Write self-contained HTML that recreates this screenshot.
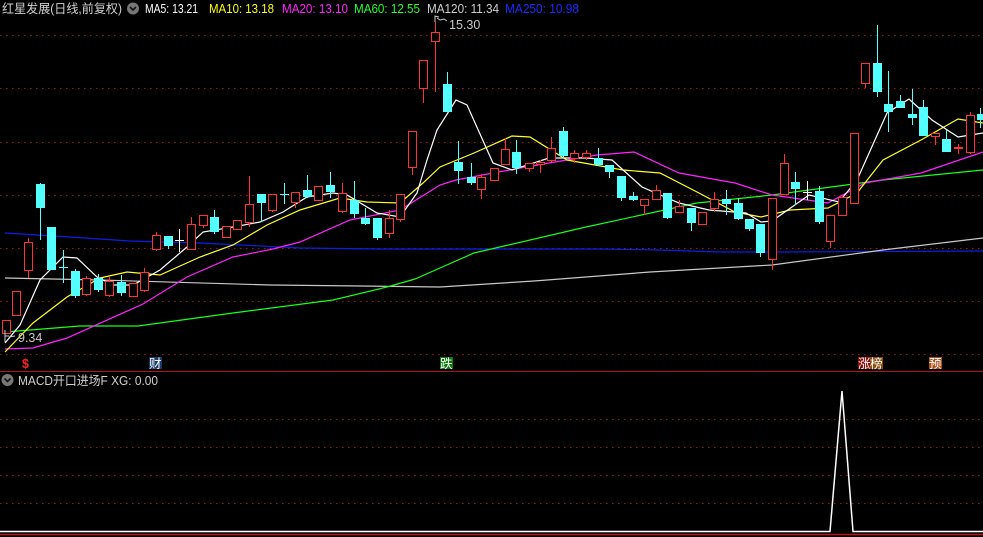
<!DOCTYPE html>
<html><head><meta charset="utf-8"><style>
html,body{margin:0;padding:0;background:#000;width:983px;height:537px;overflow:hidden}
svg{display:block}
text{font-family:"Liberation Sans","Noto Sans CJK SC",sans-serif;font-size:12.5px}
</style></head><body>
<svg width="983" height="537" viewBox="0 0 983 537" xmlns="http://www.w3.org/2000/svg">
<rect width="983" height="537" fill="#000"/>
<g stroke="#a01818" stroke-width="1" stroke-dasharray="1.5 4.5">
<line x1="0" y1="35.5" x2="983" y2="35.5"/><line x1="0" y1="88.5" x2="983" y2="88.5"/><line x1="0" y1="142.5" x2="983" y2="142.5"/><line x1="0" y1="195.5" x2="983" y2="195.5"/><line x1="0" y1="248.5" x2="983" y2="248.5"/><line x1="0" y1="301.5" x2="983" y2="301.5"/><line x1="0" y1="354.5" x2="983" y2="354.5"/>
<line x1="0" y1="419.5" x2="983" y2="419.5"/><line x1="0" y1="447.5" x2="983" y2="447.5"/><line x1="0" y1="475.5" x2="983" y2="475.5"/><line x1="0" y1="503.5" x2="983" y2="503.5"/>
</g>
<line x1="0" y1="371.5" x2="983" y2="371.5" stroke="#b01414"/>
<line x1="0" y1="534.5" x2="983" y2="534.5" stroke="#c01414" stroke-width="1.5"/>
<g fill="none" stroke-width="1.2">
<polyline stroke="#0a1ee6" points="5,233 70,237 130,241 200,243 300,248 383,249 480,249 600,249 660,250 720,252 780,252 983,251"/>
<polyline stroke="#c8c8c8" points="5,278 100,280 270,285 360,286 440,287 534,281 650,272 772,265 883,250 983,238"/>
<polyline stroke="#18ff18" points="5,332 80,326 138,326 233,313 333,300 387,287 415,279 440,268 474,253 586,227 697,203 772,195 883,180 983,170"/>
<polyline stroke="#ff22ff" points="5,349 33,348 67,338 143,304 187,277 233,257 273,249 300,242 350,220 400,210 440,185 456,180 493,173 549,163 597,155 634,152 679,173 735,183 772,195 828,203 865,183 921,173 983,152"/>
<polyline stroke="#ffff22" points="5,352 33,323 67,297 100,278 127,272 160,275 200,257 233,245 267,225 300,210 340,198 367,202 400,203 423,183 440,167 474,153 512,136 530,137 567,160 623,170 660,173 697,192 735,212 761,217 790,210 828,208 857,193 883,160 921,140 958,119 983,123"/>
<polyline stroke="#ffffff" points="5,343 20,325 40,280 63,257 77,258 97,277 113,285 133,285 160,270 187,247 203,232 233,227 260,222 283,212 307,197 333,193 347,195 377,213 400,217 417,193 427,160 437,130 456,100 467,105 493,163 512,170 549,158 586,158 612,160 642,187 679,203 709,210 746,213 761,222 772,221 809,195 839,202 857,180 887,113 909,99 932,120 958,137 983,133"/>
</g>
<g stroke="#ff3232" stroke-width="1" shape-rendering="crispEdges">
<line x1="6.5" y1="320" x2="6.5" y2="333"/><line x1="16.5" y1="291" x2="16.5" y2="315"/><line x1="28.5" y1="238" x2="28.5" y2="278"/><line x1="86.5" y1="276" x2="86.5" y2="296"/><line x1="109.5" y1="277" x2="109.5" y2="297"/><line x1="133.5" y1="283" x2="133.5" y2="296"/><line x1="144.5" y1="268" x2="144.5" y2="292"/><line x1="156.5" y1="232" x2="156.5" y2="251"/><line x1="191.5" y1="217" x2="191.5" y2="249"/><line x1="203.5" y1="215" x2="203.5" y2="228"/><line x1="226.5" y1="226" x2="226.5" y2="237"/><line x1="237.5" y1="220" x2="237.5" y2="229"/><line x1="249.5" y1="176" x2="249.5" y2="227"/><line x1="272.5" y1="194" x2="272.5" y2="212"/><line x1="295.5" y1="192" x2="295.5" y2="208"/><line x1="318.5" y1="186" x2="318.5" y2="200"/><line x1="342.5" y1="183" x2="342.5" y2="213"/><line x1="389.5" y1="210" x2="389.5" y2="238"/><line x1="400.5" y1="194" x2="400.5" y2="222"/><line x1="412.5" y1="131" x2="412.5" y2="175"/><line x1="423.5" y1="60" x2="423.5" y2="103"/><line x1="435.5" y1="22" x2="435.5" y2="92"/><line x1="481.5" y1="174" x2="481.5" y2="199"/><line x1="494.5" y1="168" x2="494.5" y2="180"/><line x1="505.5" y1="138" x2="505.5" y2="164"/><line x1="529.5" y1="163" x2="529.5" y2="172"/><line x1="540.5" y1="160" x2="540.5" y2="173"/><line x1="551.5" y1="137" x2="551.5" y2="162"/><line x1="574.5" y1="150" x2="574.5" y2="163"/><line x1="586.5" y1="150" x2="586.5" y2="160"/><line x1="644.5" y1="199" x2="644.5" y2="215"/><line x1="656.5" y1="185" x2="656.5" y2="200"/><line x1="679.5" y1="200" x2="679.5" y2="213"/><line x1="702.5" y1="212" x2="702.5" y2="224"/><line x1="714.5" y1="192" x2="714.5" y2="212"/><line x1="772.5" y1="198" x2="772.5" y2="270"/><line x1="784.5" y1="154" x2="784.5" y2="194"/><line x1="830.5" y1="215" x2="830.5" y2="248"/><line x1="842.5" y1="195" x2="842.5" y2="216"/><line x1="854.5" y1="133" x2="854.5" y2="203"/><line x1="865.5" y1="63" x2="865.5" y2="88"/><line x1="935.5" y1="133" x2="935.5" y2="145"/><line x1="958.5" y1="144" x2="958.5" y2="154"/><line x1="970.5" y1="112" x2="970.5" y2="154"/>
</g>
<g stroke="#ff3232" stroke-width="1" fill="#000" shape-rendering="crispEdges">
<rect x="2.5" y="320.5" width="8" height="13"/><rect x="12.5" y="291.5" width="8" height="24"/><rect x="24.5" y="242.5" width="8" height="28"/><rect x="82.5" y="278.5" width="8" height="16"/><rect x="105.5" y="281.5" width="8" height="14"/><rect x="129.5" y="283.5" width="8" height="13"/><rect x="140.5" y="272.5" width="8" height="18"/><rect x="152.5" y="235.5" width="8" height="14"/><rect x="187.5" y="224.5" width="8" height="25"/><rect x="199.5" y="215.5" width="8" height="10"/><rect x="222.5" y="226.5" width="8" height="11"/><rect x="233.5" y="220.5" width="8" height="9"/><rect x="245.5" y="204.5" width="8" height="18"/><rect x="268.5" y="194.5" width="8" height="16"/><rect x="291.5" y="192.5" width="8" height="10"/><rect x="314.5" y="186.5" width="8" height="14"/><rect x="338.5" y="193.5" width="8" height="18"/><rect x="385.5" y="218.5" width="8" height="15"/><rect x="396.5" y="194.5" width="8" height="25"/><rect x="408.5" y="131.5" width="8" height="36"/><rect x="419.5" y="60.5" width="8" height="28"/><rect x="431.5" y="32.5" width="8" height="9"/><rect x="477.5" y="177.5" width="8" height="12"/><rect x="490.5" y="168.5" width="8" height="12"/><rect x="501.5" y="149.5" width="8" height="15"/><rect x="525.5" y="163.5" width="8" height="5"/><rect x="536.5" y="162.5" width="8" height="2"/><rect x="547.5" y="148.5" width="8" height="12"/><rect x="570.5" y="153.5" width="8" height="5"/><rect x="582.5" y="153.5" width="8" height="4"/><rect x="640.5" y="199.5" width="8" height="6"/><rect x="652.5" y="190.5" width="8" height="9"/><rect x="675.5" y="206.5" width="8" height="6"/><rect x="698.5" y="212.5" width="8" height="12"/><rect x="710.5" y="199.5" width="8" height="9"/><rect x="768.5" y="198.5" width="8" height="61"/><rect x="780.5" y="163.5" width="8" height="31"/><rect x="826.5" y="215.5" width="8" height="26"/><rect x="838.5" y="197.5" width="8" height="18"/><rect x="850.5" y="133.5" width="8" height="70"/><rect x="861.5" y="63.5" width="8" height="20"/><rect x="931.5" y="133.5" width="8" height="3"/><rect x="954.5" y="147.5" width="8" height="1"/><rect x="966.5" y="115.5" width="8" height="37"/>
</g>
<g stroke="#54ffff" stroke-width="1" shape-rendering="crispEdges">
<line x1="40.5" y1="183" x2="40.5" y2="240"/><line x1="51.5" y1="227" x2="51.5" y2="270"/><line x1="63.5" y1="250" x2="63.5" y2="283"/><line x1="59" y1="267.5" x2="68" y2="267.5"/><line x1="75.5" y1="269" x2="75.5" y2="298"/><line x1="98.5" y1="274" x2="98.5" y2="292"/><line x1="121.5" y1="275" x2="121.5" y2="296"/><line x1="168.5" y1="236" x2="168.5" y2="249"/><line x1="214.5" y1="210" x2="214.5" y2="234"/><line x1="261.5" y1="194" x2="261.5" y2="222"/><line x1="284.5" y1="183" x2="284.5" y2="204"/><line x1="280" y1="194.5" x2="289" y2="194.5"/><line x1="307.5" y1="175" x2="307.5" y2="198"/><line x1="330.5" y1="172" x2="330.5" y2="198"/><line x1="354.5" y1="181" x2="354.5" y2="218"/><line x1="365.5" y1="208" x2="365.5" y2="225"/><line x1="377.5" y1="218" x2="377.5" y2="240"/><line x1="447.5" y1="72" x2="447.5" y2="112"/><line x1="458.5" y1="141" x2="458.5" y2="184"/><line x1="471.5" y1="163" x2="471.5" y2="185"/><line x1="516.5" y1="140" x2="516.5" y2="174"/><line x1="563.5" y1="127" x2="563.5" y2="158"/><line x1="598.5" y1="148" x2="598.5" y2="166"/><line x1="609.5" y1="165" x2="609.5" y2="178"/><line x1="621.5" y1="176" x2="621.5" y2="201"/><line x1="633.5" y1="192" x2="633.5" y2="201"/><line x1="667.5" y1="193" x2="667.5" y2="219"/><line x1="691.5" y1="208" x2="691.5" y2="231"/><line x1="726.5" y1="190" x2="726.5" y2="215"/><line x1="738.5" y1="198" x2="738.5" y2="220"/><line x1="749.5" y1="219" x2="749.5" y2="231"/><line x1="760.5" y1="224" x2="760.5" y2="257"/><line x1="795.5" y1="172" x2="795.5" y2="205"/><line x1="819.5" y1="186" x2="819.5" y2="224"/><line x1="877.5" y1="25" x2="877.5" y2="97"/><line x1="888.5" y1="71" x2="888.5" y2="132"/><line x1="900.5" y1="95" x2="900.5" y2="108"/><line x1="912.5" y1="89" x2="912.5" y2="125"/><line x1="923.5" y1="100" x2="923.5" y2="136"/><line x1="946.5" y1="130" x2="946.5" y2="152"/><line x1="980.5" y1="108" x2="980.5" y2="128"/>
</g>
<g fill="#54ffff" shape-rendering="crispEdges">
<rect x="36" y="184" width="9" height="24"/><rect x="47" y="227" width="9" height="43"/><rect x="71" y="271" width="9" height="25"/><rect x="94" y="278" width="9" height="12"/><rect x="117" y="282" width="9" height="11"/><rect x="164" y="236" width="9" height="10"/><rect x="210" y="217" width="9" height="15"/><rect x="257" y="194" width="9" height="9"/><rect x="303" y="190" width="9" height="7"/><rect x="326" y="185" width="9" height="7"/><rect x="350" y="200" width="9" height="14"/><rect x="361" y="218" width="9" height="6"/><rect x="373" y="218" width="9" height="20"/><rect x="443" y="84" width="9" height="28"/><rect x="454" y="162" width="9" height="9"/><rect x="467" y="177" width="9" height="6"/><rect x="512" y="152" width="9" height="16"/><rect x="559" y="131" width="9" height="25"/><rect x="594" y="158" width="9" height="7"/><rect x="605" y="165" width="9" height="7"/><rect x="617" y="176" width="9" height="22"/><rect x="629" y="196" width="9" height="4"/><rect x="663" y="193" width="9" height="25"/><rect x="687" y="208" width="9" height="15"/><rect x="722" y="199" width="9" height="5"/><rect x="734" y="203" width="9" height="16"/><rect x="745" y="219" width="9" height="10"/><rect x="756" y="224" width="9" height="29"/><rect x="791" y="182" width="9" height="7"/><rect x="815" y="191" width="9" height="31"/><rect x="873" y="63" width="9" height="29"/><rect x="884" y="104" width="9" height="8"/><rect x="896" y="101" width="9" height="7"/><rect x="908" y="114" width="9" height="4"/><rect x="919" y="107" width="9" height="29"/><rect x="942" y="139" width="9" height="13"/><rect x="977" y="114" width="6" height="6"/>
</g>
<g stroke="#fff" stroke-width="1" shape-rendering="crispEdges">
<line x1="179.5" y1="229" x2="179.5" y2="252"/><line x1="175" y1="240.5" x2="184" y2="240.5"/>
<line x1="807.5" y1="181" x2="807.5" y2="200"/><line x1="803" y1="192.5" x2="812" y2="192.5"/>
</g>
<path d="M435 22 L435 16 L439 17 M437 18 L440 20 L444 19 L447 21" stroke="#ccc" fill="none"/>
<text x="449" y="29" fill="#c8c8c8">15.30</text>
<path d="M5 330 L5 342 M5 336 L9 336 M9 337 L15 336" stroke="#ccc" fill="none"/>
<text x="18" y="342" fill="#c8c8c8">9.34</text>
<text x="2" y="13" fill="#d0d0d0" textLength="120" lengthAdjust="spacingAndGlyphs">红星发展(日线,前复权)</text>
<circle cx="133" cy="8.5" r="6" fill="#777"/><path d="M130 7 L133 10 L136 7" stroke="#111" stroke-width="1.6" fill="none"/>
<text x="145" y="13" fill="#fff" textLength="53" lengthAdjust="spacingAndGlyphs">MA5: 13.21</text>
<text x="209" y="13" fill="#ffff00" textLength="65" lengthAdjust="spacingAndGlyphs">MA10: 13.18</text>
<text x="282" y="13" fill="#ff22ff" textLength="66" lengthAdjust="spacingAndGlyphs">MA20: 13.10</text>
<text x="354" y="13" fill="#22ff22" textLength="66" lengthAdjust="spacingAndGlyphs">MA60: 12.55</text>
<text x="427" y="13" fill="#d0d0d0" textLength="72" lengthAdjust="spacingAndGlyphs">MA120: 11.34</text>
<text x="505" y="13" fill="#1a2aff" textLength="74" lengthAdjust="spacingAndGlyphs">MA250: 10.98</text>
<text x="22" y="368" fill="#ff2020" font-weight="bold">$</text>
<rect x="149" y="357" width="13" height="12" fill="#1a3a6a"/><text x="149" y="368" fill="#fff" font-size="12">财</text>
<rect x="440" y="357" width="13" height="12" fill="#0a7a0a"/><text x="440" y="368" fill="#fff" font-size="12">跌</text>
<rect x="858" y="357" width="12" height="12" fill="#8a0a0a"/><text x="858" y="368" fill="#fff" font-size="12">涨</text>
<rect x="870" y="357" width="13" height="12" fill="#8a4a08"/><text x="870" y="368" fill="#fff" font-size="12">榜</text>
<rect x="929" y="357" width="13" height="12" fill="#b0501a"/><text x="929" y="368" fill="#fff" font-size="12">预</text>
<circle cx="7.5" cy="380" r="6" fill="#777"/><path d="M4.5 378.5 L7.5 381.5 L10.5 378.5" stroke="#111" stroke-width="1.6" fill="none"/>
<text x="18" y="385" fill="#d0d0d0" textLength="140" lengthAdjust="spacingAndGlyphs">MACD开口进场F  XG: 0.00</text>
<polyline points="0,531.5 830,531.5 842,391 853,531.5 983,531.5" fill="none" stroke="#fff" stroke-width="1.5"/>
</svg>
</body></html>
